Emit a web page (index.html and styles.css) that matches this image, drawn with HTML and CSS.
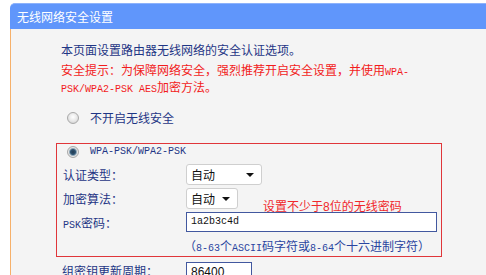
FILE: index.html
```html
<!DOCTYPE html>
<html>
<head>
<meta charset="utf-8">
<link rel="stylesheet" href="styles.css">
</head>
<body>
<div class="panel">
  <div class="head">无线网络安全设置</div>
  <div class="body">
    <p class="intro">本页面设置路由器无线网络的安全认证选项。</p>
    <p class="warn">安全提示：为保障网络安全，强烈推荐开启安全设置，并使用<span class="m">WPA-</span></p>
    <p class="warn"><span class="m">PSK/WPA2-PSK AES</span>加密方法。</p>
    <div class="radio-row off"><span class="radio"></span><span>不开启无线安全</span></div>
    <div class="box">
      <div class="radio-row"><span class="radio on"></span><span class="m">WPA-PSK/WPA2-PSK</span></div>
      <div class="grid">
        <div class="lbl">认证类型：</div>
        <div class="ctl"><div class="select w1"><span>自动</span><span class="arrow"></span></div></div>
        <div class="lbl">加密算法：</div>
        <div class="ctl"><div class="select w2"><span>自动</span><span class="arrow"></span></div></div>
        <div class="lbl"><span class="m">PSK</span>密码：</div>
        <div class="ctl"><div class="input wide"><span class="m">1a2b3c4d</span></div></div>
        <div class="lbl"></div>
        <div class="ctl hint">（<span class="m">8-63</span>个<span class="m">ASCII</span>码字符或<span class="m">8-64</span>个十六进制字符）</div>
      </div>
      <div class="note">设置不少于<span class="n">8</span>位的无线密码</div>
    </div>
    <div class="grid outer">
      <div class="lbl">组密钥更新周期：</div>
      <div class="ctl"><div class="input short"><span class="num">86400</span></div></div>
    </div>
  </div>
</div>
</body>
</html>
```

FILE: styles.css
```css
* { box-sizing: border-box; }
html, body { margin: 0; padding: 0; background: #ffffff; overflow: hidden; }
body {
  font-family: "Noto Sans CJK SC", sans-serif;
  font-size: 12px;
  color: #1f3685;
}
.m {
  font-family: "Liberation Mono", "Noto Sans CJK SC", monospace;
  font-size: 10px;
  line-height: 10px;
}
.panel {
  margin: 3px 0 0 10px;
  height: 272px;
  display: flex;
  flex-direction: column;
}
.head {
  height: 27px;
  background: #6096fb;
  border-top: 1px solid #8db2fb;
  border-top-left-radius: 5px;
  color: #ffffff;
  line-height: 25px;
  padding-left: 7px;
  font-size: 12px;
}
.body {
  flex: 1;
  background: #f4f4f4;
  border-left: 1px solid #f6b06a;
  padding: 12px 0 0 50px;
}
p { margin: 0; height: 17px; line-height: 17px; }
.intro { margin-bottom: 3px; }
.warn { color: #f21c1c; }
.radio-row {
  display: flex;
  align-items: center;
  height: 17px;
}
.radio-row.off { margin-top: 14px; }
.radio {
  width: 12px;
  height: 12px;
  border-radius: 50%;
  border: 1px solid #a9a9a9;
  background: radial-gradient(circle at 50% 40%, #ffffff 0%, #e6e6e6 55%, #c4c4c4 100%);
  margin: 0 11px 0 6px;
  flex: none;
}
.radio.on {
  margin-left: 4px;
  background: radial-gradient(circle, #22394f 0, #2f5574 2.5px, #8fa6b6 3.5px, #e8e8e8 4.5px, #c9c9c9 6px);
}
.box {
  position: relative;
  margin: 17px 0 0 -5px;
  width: 386px;
  border: 1px solid #e0363a;
  padding: 0 0 2px 6px;
}
.box .radio-row { height: 16px; }
.grid {
  display: grid;
  grid-template-columns: 123px 1fr;
  align-items: center;
}
.lbl { height: 17px; line-height: 17px; }
.grid > .lbl:nth-child(1), .grid > .ctl:nth-child(2) { margin-top: 4px; }
.grid > .lbl:nth-child(3), .grid > .ctl:nth-child(4) { margin-top: 3px; }
.grid > .lbl:nth-child(5), .grid > .ctl:nth-child(6) { margin-top: 3px; }
.grid > .lbl:nth-child(7), .grid > .ctl:nth-child(8) { margin-top: 5px; }
.select {
  height: 21px;
  background: #ffffff;
  border: 1px solid #cfcfcf;
  border-radius: 3px;
  display: flex;
  align-items: center;
  justify-content: space-between;
  padding: 0 7px 0 4px;
  color: #111111;
}
.w1 { width: 76px; }
.w2 { width: 52px; }
.arrow {
  width: 0;
  height: 0;
  border-left: 4px solid transparent;
  border-right: 4px solid transparent;
  border-top: 4px solid #111111;
}
.input {
  height: 20px;
  background: #ffffff;
  border: 1px solid #42589f;
  display: flex;
  align-items: center;
  padding-left: 4px;
  color: #111111;
}
.wide { width: 251px; }
.short { width: 66px; }
.hint { color: #2a45a0; height: 17px; line-height: 17px; white-space: nowrap; margin-left: -2px; }
.note {
  position: absolute;
  left: 206px;
  top: 54px;
  color: #f0282c;
  line-height: 16px;
}
.note .n { font-family: "Liberation Sans", sans-serif; }
.outer { grid-template-columns: 125px 1fr; margin-top: 1px; align-items: start; }
.outer .lbl { padding-left: 1px; }
.num { font-family: "Liberation Sans", sans-serif; font-size: 12px; line-height: 12px; }
```
